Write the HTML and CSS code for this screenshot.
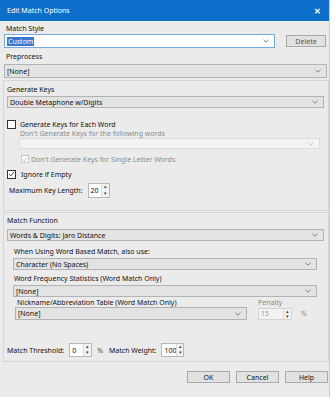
FILE: index.html
```html
<!DOCTYPE html>
<html lang="en">
<head>
  <meta charset="UTF-8">
  <link rel="stylesheet" href="styles.css">
  <title>Edit Match Options</title>
</head>
<body>
  <div class="dialog">
    <div class="titlebar">
      <span>Edit Match Options</span>
      <span class="close">&#x2715;</span>
    </div>

    <div class="label top-label">Match Style</div>
    <div class="row style-row">
      <div class="combo combo-focus style-combo">
        <span class="selected">Custom</span>
        <svg class="arrow" width="6" height="4" viewBox="0 0 6 4"><path d="M0.5 0.8 L3 3.2 L5.5 0.8" fill="none" stroke="#777" stroke-width="0.9"/></svg>
      </div>
      <div class="btn delete-btn">Delete</div>
    </div>

    <div class="label pre-label">Preprocess</div>
    <div class="combo pre-combo">
      <span>[None]</span>
      <svg class="arrow" width="6" height="4" viewBox="0 0 6 4"><path d="M0.5 0.8 L3 3.2 L5.5 0.8" fill="none" stroke="#777" stroke-width="0.9"/></svg>
    </div>

    <div class="group keys-group">
      <div class="label gk-label">Generate Keys</div>
      <div class="combo gk-combo">
        <span>Double Metaphone w/Digits</span>
        <svg class="arrow" width="6" height="4" viewBox="0 0 6 4"><path d="M0.5 0.8 L3 3.2 L5.5 0.8" fill="none" stroke="#777" stroke-width="0.9"/></svg>
      </div>
      <div class="check-row each-row">
        <span class="box"></span>
        <span>Generate Keys for Each Word</span>
      </div>
      <div class="label muted skip-label">Don't Generate Keys for the following words</div>
      <div class="combo combo-disabled skip-combo">
        <span></span>
        <svg class="arrow" width="6" height="4" viewBox="0 0 6 4"><path d="M0.5 0.8 L3 3.2 L5.5 0.8" fill="none" stroke="#bbb" stroke-width="0.9"/></svg>
      </div>
      <div class="check-row muted single-row">
        <span class="box box-disabled">
          <svg width="7" height="7" viewBox="0 0 7 7"><path d="M1 3.5 L3 5.5 L6 1.5" fill="none" stroke="#b5b5b5" stroke-width="1"/></svg>
        </span>
        <span>Don't Generate Keys for Single Letter Words</span>
      </div>
      <div class="check-row empty-row">
        <span class="box">
          <svg width="8" height="8" viewBox="0 0 8 8"><path d="M1 4 L3.2 6.2 L7 1.5" fill="none" stroke="#333" stroke-width="1"/></svg>
        </span>
        <span>Ignore if Empty</span>
      </div>
      <div class="row maxlen-row">
        <span>Maximum Key Length:</span>
        <div class="spin maxlen-spin">
          <span>20</span>
          <span class="spin-btns"><i>&#x25B4;</i><i>&#x25BE;</i></span>
        </div>
      </div>
    </div>

    <div class="group match-group">
      <div class="label mf-label">Match Function</div>
      <div class="combo mf-combo">
        <span>Words &amp; Digits: Jaro Distance</span>
        <svg class="arrow" width="6" height="4" viewBox="0 0 6 4"><path d="M0.5 0.8 L3 3.2 L5.5 0.8" fill="none" stroke="#777" stroke-width="0.9"/></svg>
      </div>
      <div class="label sub-label">When Using Word Based Match, also use:</div>
      <div class="combo sub-combo">
        <span>Character (No Spaces)</span>
        <svg class="arrow" width="6" height="4" viewBox="0 0 6 4"><path d="M0.5 0.8 L3 3.2 L5.5 0.8" fill="none" stroke="#777" stroke-width="0.9"/></svg>
      </div>
      <div class="label freq-label">Word Frequency Statistics (Word Match Only)</div>
      <div class="combo sub-combo">
        <span>[None]</span>
        <svg class="arrow" width="6" height="4" viewBox="0 0 6 4"><path d="M0.5 0.8 L3 3.2 L5.5 0.8" fill="none" stroke="#777" stroke-width="0.9"/></svg>
      </div>
      <div class="row nick-labels">
        <span class="nick-label">Nickname/Abbreviation Table (Word Match Only)</span>
        <span class="muted penalty-label">Penalty</span>
      </div>
      <div class="row nick-row">
        <div class="combo nick-combo">
          <span>[None]</span>
          <svg class="arrow" width="6" height="4" viewBox="0 0 6 4"><path d="M0.5 0.8 L3 3.2 L5.5 0.8" fill="none" stroke="#777" stroke-width="0.9"/></svg>
        </div>
        <div class="spin spin-disabled penalty-spin">
          <span>15</span>
          <span class="spin-btns"><i>&#x25B4;</i><i>&#x25BE;</i></span>
        </div>
        <span class="muted pct">%</span>
      </div>
      <div class="row threshold-row">
        <span>Match Threshold:</span>
        <div class="spin small-spin">
          <span>0</span>
          <span class="spin-btns"><i>&#x25B4;</i><i>&#x25BE;</i></span>
        </div>
        <span class="pct2">%</span>
        <span class="weight-label">Match Weight:</span>
        <div class="spin small-spin">
          <span>100</span>
          <span class="spin-btns"><i>&#x25B4;</i><i>&#x25BE;</i></span>
        </div>
      </div>
    </div>

    <div class="row footer">
      <div class="btn">OK</div>
      <div class="btn">Cancel</div>
      <div class="btn">Help</div>
    </div>
  </div>
</body>
</html>
```

FILE: styles.css
```css
body {
  margin: 0;
  background-color: #fff;
  font-family: "Noto Sans", "Open Sans", sans-serif;
  font-size: 7px;
  color: #111;
}

.dialog {
  width: 330px;
  height: 397px;
  background-color: #ebebeb;
  border-right: 1px solid #c9ced6;
  box-sizing: border-box;
  overflow: hidden;
}

.titlebar {
  height: 21px;
  background-color: #0d6fc9;
  color: #fff;
  display: flex;
  align-items: center;
  justify-content: space-between;
  padding: 0 7px;
}

.close {
  font-size: 8px;
  font-weight: bold;
  padding-right: 1px;
}

.label {
  height: 10px;
  line-height: 10px;
  white-space: nowrap;
}

.muted {
  color: #8c8c8c;
}

.row {
  display: flex;
  align-items: center;
  white-space: nowrap;
}

.combo {
  display: flex;
  align-items: center;
  justify-content: space-between;
  background-color: #e3e3e3;
  border: 1px solid #b3b3b3;
  box-sizing: border-box;
  padding: 0 5px 0 2px;
  white-space: nowrap;
}

.combo-focus {
  background-color: #fff;
  border-color: #7aa9dd;
}

.combo-disabled {
  background-color: #f3f3f3;
  border-color: #dcdcdc;
}

.selected {
  background-color: #3a78d0;
  color: #fff;
  padding: 0 1px;
}

.btn {
  display: flex;
  align-items: center;
  justify-content: center;
  width: 43px;
  height: 12px;
  background-color: #e2e2e2;
  border: 1px solid #a9a9a9;
  box-sizing: border-box;
}

/* top area */
.top-label {
  margin: 3px 0 0 6px;
}

.style-combo {
  margin-left: 4px;
  width: 271px;
  height: 14px;
}

.delete-btn {
  width: 40px;
  margin-left: 11px;
  color: #555;
}

.pre-label {
  margin: 4px 0 0 6px;
}

.pre-combo {
  margin: 2px 0 0 4px;
  width: 323px;
  height: 14px;
}

/* group boxes */
.group {
  margin-left: 3px;
  width: 326px;
  border: 1px solid #d6d6d6;
  box-sizing: border-box;
}

.keys-group {
  margin-top: 2px;
  height: 131px;
}

.gk-label {
  margin: 4px 0 0 3px;
}

.gk-combo {
  margin: 1px 0 0 3px;
  width: 317px;
  height: 12px;
}

.check-row {
  display: flex;
  align-items: center;
  height: 10px;
  gap: 4px;
  white-space: nowrap;
}

.box {
  width: 9px;
  height: 9px;
  border: 1px solid #333;
  background-color: #fff;
  box-sizing: border-box;
  display: flex;
  align-items: center;
  justify-content: center;
}

.box-disabled {
  border-color: #c9c9c9;
  width: 8px;
  height: 8px;
}

.each-row {
  margin: 11px 0 0 3px;
}

.skip-label {
  height: 9px;
  line-height: 9px;
  margin-left: 16px;
}

.skip-combo {
  margin: 0 0 0 15px;
  width: 301px;
  height: 11px;
}

.single-row {
  margin: 5px 0 0 17px;
  gap: 2px;
}

.empty-row {
  margin: 5px 0 0 3px;
  gap: 5px;
}

.maxlen-row {
  margin: 4px 0 0 5px;
  gap: 5px;
}

.spin {
  display: flex;
  align-items: center;
  justify-content: space-between;
  background-color: #fff;
  border: 1px solid #b8b8b8;
  box-sizing: border-box;
  padding-left: 2px;
}

.spin-btns {
  display: flex;
  flex-direction: column;
  width: 7px;
  height: 100%;
  border-left: 1px solid #ddd;
  background-color: #f2f2f2;
}

.spin-btns i {
  flex: 1;
  font-style: normal;
  font-size: 5px;
  line-height: 5px;
  text-align: center;
  color: #444;
}

.maxlen-spin {
  width: 22px;
  height: 15px;
}

.match-group {
  margin-top: 1px;
  height: 150px;
}

.mf-label {
  margin: 3px 0 0 3px;
}

.mf-combo {
  margin: 3px 0 0 3px;
  width: 317px;
  height: 12px;
}

.sub-label {
  margin: 6px 0 0 10px;
}

.sub-combo {
  margin: 1px 0 0 9px;
  width: 304px;
  height: 12px;
}

.freq-label {
  margin: 4px 0 0 10px;
}

.nick-labels {
  height: 10px;
  margin-left: 13px;
}

.nick-label {
  width: 241px;
}

.nick-row {
  margin-left: 11px;
  height: 13px;
}

.nick-combo {
  width: 232px;
  height: 13px;
}

.spin-disabled {
  background-color: #f3f3f3;
  border-color: #d4d4d4;
  color: #999;
}

.penalty-spin {
  margin-left: 11px;
  width: 34px;
  height: 12px;
}

.pct {
  margin-left: 9px;
}

.threshold-row {
  margin: 23px 0 0 3px;
}

.small-spin {
  width: 23px;
  height: 14px;
  margin-left: 5px;
}

.pct2 {
  margin-left: 5px;
  color: #555;
}

.weight-label {
  margin-left: 6px;
}

.footer {
  margin: 9px 0 0 187px;
  gap: 6px;
}
```
